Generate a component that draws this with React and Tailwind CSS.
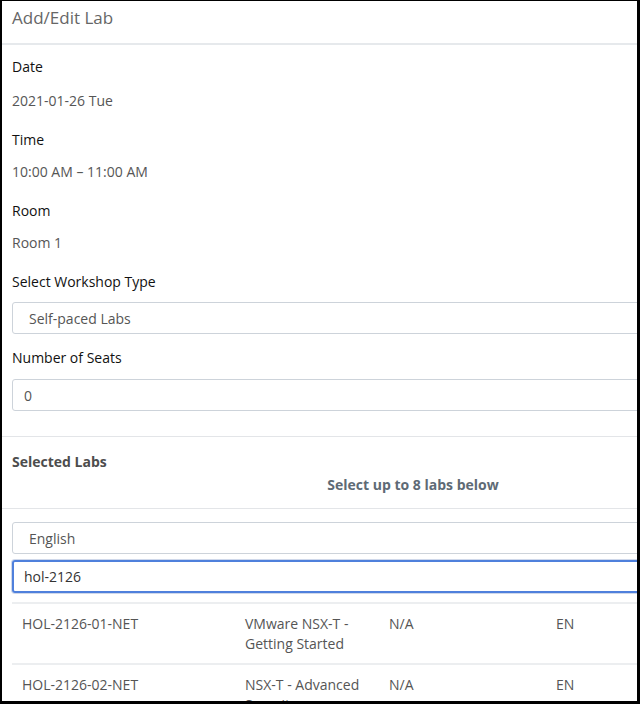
import React from "react";

const labs = [
  { id: "HOL-2126-01-NET", name: ["VMware NSX-T -", "Getting Started"], status: "N/A", lang: "EN" },
  { id: "HOL-2126-02-NET", name: ["NSX-T - Advanced", "Security"], status: "N/A", lang: "EN" },
];

const Field = ({ label, value, first }) => (
  <div>
    <div className={`text-[14px] leading-[20px] text-[#111] ${first ? "pt-[12px]" : "pt-[19px]"}`}>{label}</div>
    <div className={`text-[14px] leading-[20px] text-[#565656] ${first ? "pt-[14px]" : "pt-[12px]"}`}>{value}</div>
  </div>
);

const App = () => {
  return (
    <div className="w-[640px] h-[704px] overflow-hidden bg-white" style={{ fontFamily: "'Open Sans', Lato, sans-serif" }}>
      <div className="w-full h-full border-l-2 border-t border-r-[3px] border-b-[3px] border-black overflow-hidden">
        <div className="w-[830px]">
          <div className="h-[42px] pl-[10px] pt-[5px] text-[17px] leading-[24px] text-[#666]">Add/Edit Lab</div>
          <div className="h-[2px] bg-[#e6e9ec]" />

          <div className="pl-[10px] w-[812px]">
            <Field label="Date" value="2021-01-26 Tue" first />
            <Field label="Time" value="10:00 AM – 11:00 AM" />
            <Field label="Room" value="Room 1" />

            <div className="text-[14px] leading-[20px] text-[#111] pt-[19px]">Select Workshop Type</div>
            <div className="mt-[10px] h-[32px] border border-[#cdd3da] rounded-[3px] pl-[16px] flex items-center text-[14px] text-[#555]">
              Self-paced Labs
            </div>

            <div className="text-[14px] leading-[20px] text-[#111] pt-[14px]">Number of Seats</div>
            <div className="mt-[11px] h-[32px] border border-[#cdd3da] rounded-[3px] pl-[11px] flex items-center text-[14px] text-[#555]">
              0
            </div>
          </div>

          <div className="mt-[25px] h-px bg-[#e3e5e8]" />

          <div className="pl-[10px] w-[812px]">
            <div className="pt-[15px] text-[14px] leading-[20px] font-bold text-[#4d4d4d]">Selected Labs</div>
            <div className="pt-[3px] text-[14px] leading-[20px] font-bold text-[#5e6a75] text-center">Select up to 8 labs below</div>
          </div>

          <div className="mt-[13px] h-px bg-[#e3e5e8]" />

          <div className="pl-[10px] w-[812px]">
            <div className="mt-[13px] h-[32px] border border-[#cdd3da] rounded-[3px] pl-[16px] flex items-center text-[14px] text-[#555]">
              English
            </div>
            <div className="mt-[6px] h-[33px] border-2 border-[#4f80dc] rounded-[3px] pl-[10px] flex items-center text-[14px] text-[#333] shadow-[0_0_0_1px_#cfd8ea]">
              hol-2126
            </div>

            <div className="mt-[9px]">
              {labs.map((lab) => (
                <div key={lab.id} className="border-t-2 border-[#eceef0] h-[61px] grid grid-cols-[223px_144px_167px_1fr] pl-[10px] pt-[10px] text-[14px] leading-[20px] text-[#555]">
                  <div>{lab.id}</div>
                  <div>
                    {lab.name.map((n) => (
                      <div key={n}>{n}</div>
                    ))}
                  </div>
                  <div>{lab.status}</div>
                  <div>{lab.lang}</div>
                </div>
              ))}
            </div>
          </div>
        </div>
      </div>
    </div>
  );
};

export default App;
